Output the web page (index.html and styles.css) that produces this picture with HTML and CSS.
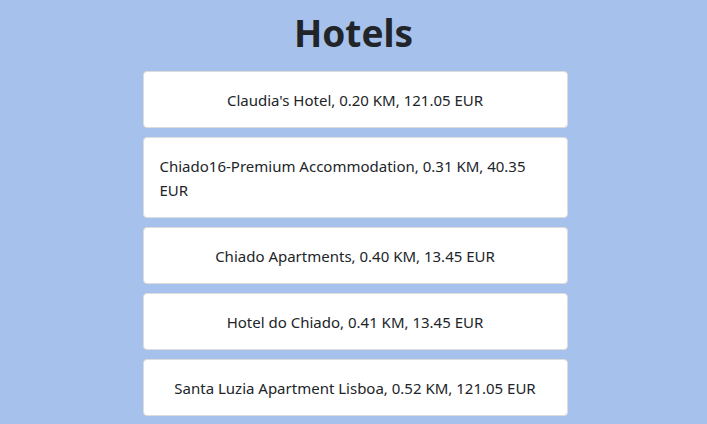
FILE: index.html
```html
<!DOCTYPE html>
<html lang="en">
<head>
<meta charset="utf-8">
<title>Hotels</title>
<link rel="stylesheet" href="styles.css">
</head>
<body>
<main class="page">
  <h1 class="title">Hotels</h1>
  <ul class="hotel-list">
    <li class="hotel-card"><span>Claudia's Hotel, 0.20 KM, 121.05 EUR</span></li>
    <li class="hotel-card"><span>Chiado16-Premium Accommodation, 0.31 KM, 40.35 EUR</span></li>
    <li class="hotel-card"><span>Chiado Apartments, 0.40 KM, 13.45 EUR</span></li>
    <li class="hotel-card"><span>Hotel do Chiado, 0.41 KM, 13.45 EUR</span></li>
    <li class="hotel-card"><span>Santa Luzia Apartment Lisboa, 0.52 KM, 121.05 EUR</span></li>
  </ul>
</main>
</body>
</html>
```
FILE: styles.css
```css
html, body {
  margin: 0;
  padding: 0;
  background: #a6c1eb;
}
body {
  font-family: "Noto Sans", "Open Sans", sans-serif;
  color: #212529;
}
.page {
  display: flex;
  flex-direction: column;
  align-items: center;
  padding-top: 3px;
}
.title {
  margin: 0 0 9px;
  font-size: 37px;
  line-height: 59px;
  font-weight: 700;
  text-align: center;
}
.hotel-list {
  list-style: none;
  margin: 0 0 0 3px;
  padding: 0;
  width: 425px;
  display: flex;
  flex-direction: column;
  gap: 9px;
}
.hotel-card {
  display: flex;
  justify-content: center;
  background: #fff;
  border: 1px solid #dcdcdc;
  border-radius: 4px;
  padding: 16px 16px 15px;
  font-size: 15px;
  line-height: 24px;
}
```
